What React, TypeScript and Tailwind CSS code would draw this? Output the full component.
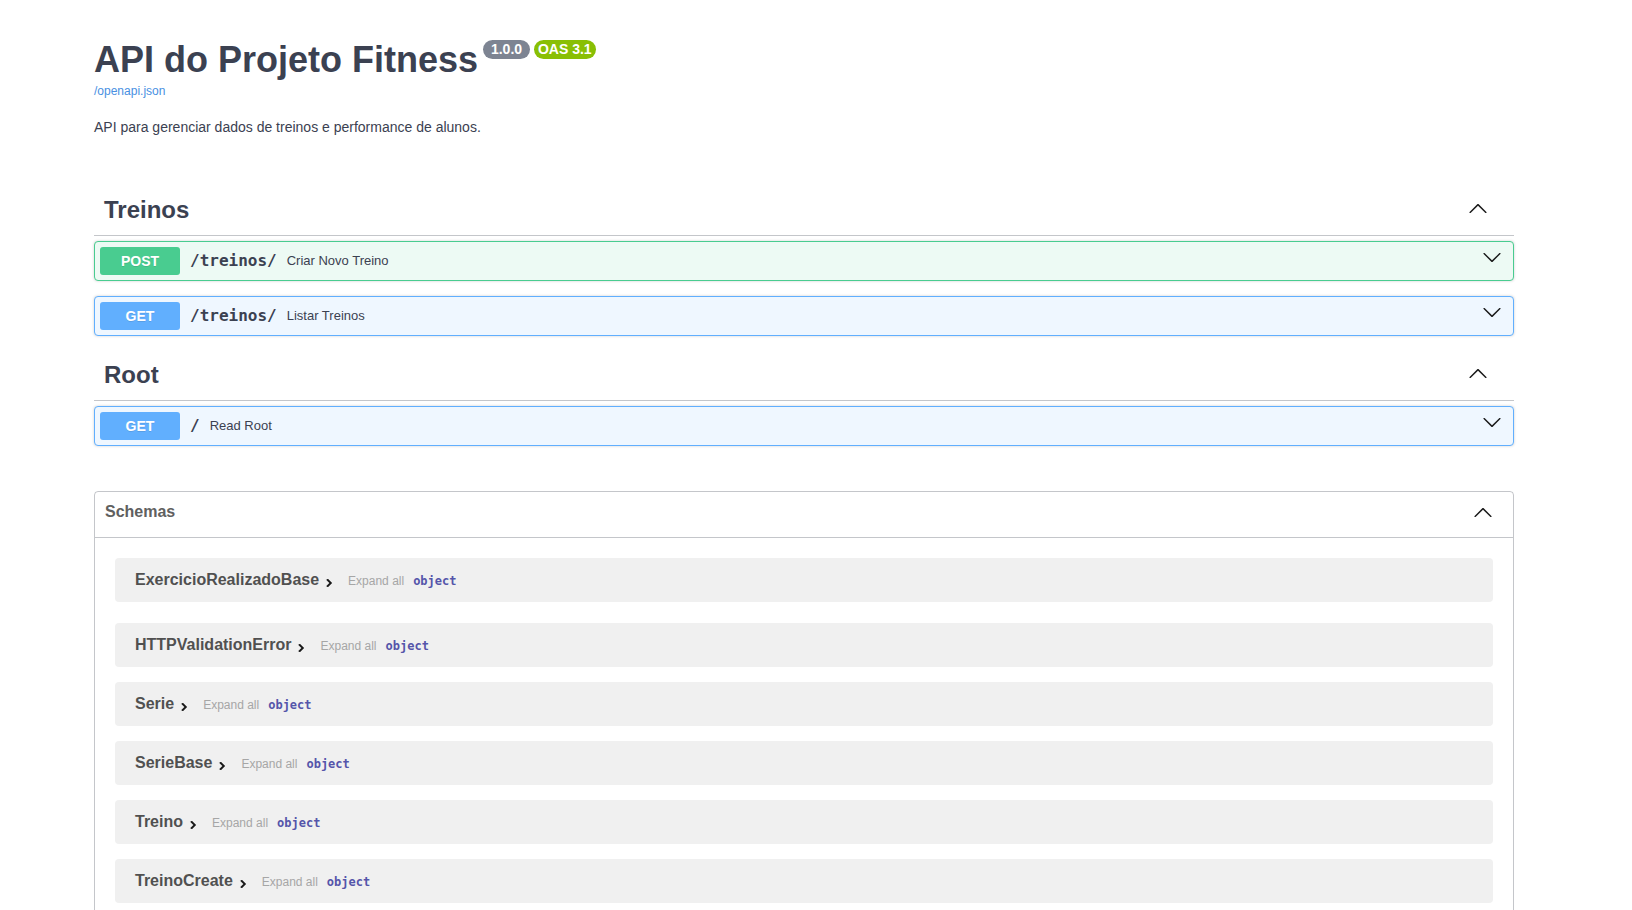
import React from "react";

const SANS = "font-['Liberation_Sans',Arial,sans-serif]";
const MONO = "font-['DejaVu_Sans_Mono',monospace]";

const UpArrow = ({ className = "" }: { className?: string }) => (
  <svg width="20" height="20" viewBox="0 0 20 20" className={className} aria-hidden="true">
    <path
      fill="#1a1a1a"
      d="M17.418 14.908c.272.268.709.268.979 0s.266-.701 0-.969l-7.908-7.83c-.27-.268-.707-.268-.979 0l-7.908 7.83c-.27.268-.27.701 0 .969.271.268.709.268.979 0L10 7.771l7.418 7.137z"
    />
  </svg>
);

const DownArrow = ({ className = "" }: { className?: string }) => (
  <svg width="20" height="20" viewBox="0 0 20 20" className={className} aria-hidden="true">
    <path
      fill="#1a1a1a"
      d="M17.418 6.109c.272-.268.709-.268.979 0s.266.701 0 .969l-7.908 7.83c-.27.268-.707.268-.979 0l-7.908-7.83c-.27-.268-.27-.701 0-.969.271-.268.709-.268.979 0L10 13.25l7.418-7.141z"
    />
  </svg>
);

const RightChevron = () => (
  <svg width="16" height="16" viewBox="0 0 24 24" className="ml-[2px] self-center mt-[5px] shrink-0" aria-hidden="true">
    <path fill="#111" stroke="#111" strokeWidth="1.2" strokeLinejoin="round" d="M10 6L8.59 7.41 13.17 12l-4.58 4.59L10 18l6-6z" />
  </svg>
);

type Op = { method: "POST" | "GET"; path: string; summary: string };

function OpBlock({ op }: { op: Op }) {
  const isPost = op.method === "POST";
  return (
    <div
      className={
        "mb-[15px] h-[40px] rounded-[4px] border p-[5px] flex items-center shadow-[0_0_3px_rgba(0,0,0,0.19)] " +
        (isPost ? "border-[#49cc90] bg-[#edfaf4]" : "border-[#61affe] bg-[#eff7ff]")
      }
    >
      <span
        className={
          "min-w-[80px] rounded-[3px] py-[6px] text-center text-[14px] leading-[16px] font-bold text-white [text-shadow:0_1px_0_rgba(0,0,0,0.1)] " +
          (isPost ? "bg-[#49cc90]" : "bg-[#61affe]")
        }
      >
        {op.method}
      </span>
      <span className={MONO + " px-[10px] text-[16px] leading-[20px] font-bold text-[#3b4151]"}>{op.path}</span>
      <span className="text-[13px] leading-[16px] text-[#3b4151]">{op.summary}</span>
      <DownArrow className="ml-auto mr-[6px] self-start shrink-0" />
    </div>
  );
}

function TagSection({ name, ops }: { name: string; ops: Op[] }) {
  return (
    <section>
      <div className="mb-[5px] flex h-[50px] items-start border-b border-[rgba(59,65,81,0.3)] pl-[10px] pr-[26px] pt-[10px]">
        <h3 className="text-[24px] leading-[28px] font-bold text-[#3b4151]">{name}</h3>
        <UpArrow className="ml-auto mt-[2px] shrink-0" />
      </div>
      {ops.map((op, i) => (
        <OpBlock key={i} op={op} />
      ))}
    </section>
  );
}

const schemas = [
  "ExercicioRealizadoBase",
  "HTTPValidationError",
  "Serie",
  "SerieBase",
  "Treino",
  "TreinoCreate",
];

export default function App() {
  return (
    <div className={SANS + " h-[910px] overflow-hidden bg-white text-[#3b4151]"}>
      <div className="ml-[74px] w-[1460px] px-[20px] pt-[39px]">
        {/* Info */}
        <div>
          <div className="flex items-start">
            <h2 className="mt-[1px] text-[36px] leading-[40px] font-bold text-[#3b4151]">API do Projeto Fitness</h2>
            <span className="ml-[5px] mt-[1px] rounded-[57px] bg-[#7d8492] px-[4px] py-[2px] text-[14px] leading-[15px] font-bold text-white whitespace-pre">
              {" 1.0.0 "}
            </span>
            <span className="ml-[4px] mt-[1px] rounded-[57px] bg-[#89bf04] px-[4px] py-[2px] text-[14px] leading-[15px] font-bold text-white whitespace-pre">
              OAS 3.1
            </span>
          </div>
          <div className="mt-[4px] text-[12px] leading-[14px]">
            <a className="text-[#4990e2]">/openapi.json</a>
          </div>
          <p className="mt-[19px] text-[14px] leading-[20px] text-[#3b4151]">
            API para gerenciar dados de treinos e performance de alunos.
          </p>
        </div>

        {/* Operations */}
        <div className="mt-[49px]">
          <TagSection
            name="Treinos"
            ops={[
              { method: "POST", path: "/treinos/", summary: "Criar Novo Treino" },
              { method: "GET", path: "/treinos/", summary: "Listar Treinos" },
            ]}
          />
          <TagSection name="Root" ops={[{ method: "GET", path: "/", summary: "Read Root" }]} />
        </div>

        {/* Schemas */}
        <section className="mt-[45px] rounded-[4px] border border-[rgba(59,65,81,0.3)]">
          <div className="flex h-[46px] items-start border-b border-[rgba(59,65,81,0.3)] pl-[10px] pr-[20px]">
            <h4 className="pt-[11px] text-[16px] leading-[18px] font-bold text-[#606060]">Schemas</h4>
            <UpArrow className="ml-auto mt-[10px] shrink-0" />
          </div>
          <div className="pt-[20px] pb-[20px]">
            {schemas.map((s, i) => (
              <div
                key={s}
                className={
                  "mx-[20px] flex h-[44px] items-center rounded-[4px] bg-[#f0f0f0] pl-[20px] " +
                  (i === 0 ? "mb-[21px]" : "mb-[15px]")
                }
              >
                <div className="flex items-baseline">
                  <span className="text-[16px] leading-[20px] font-bold text-[#505050]">{s}</span>
                  <RightChevron />
                  <span className="ml-[11px] text-[12px] leading-[20px] text-[#a6a6a6]">Expand all</span>
                  <span className={MONO + " ml-[9px] text-[12px] leading-[20px] font-bold text-[#55a]"}>object</span>
                </div>
              </div>
            ))}
          </div>
        </section>
      </div>
    </div>
  );
}
